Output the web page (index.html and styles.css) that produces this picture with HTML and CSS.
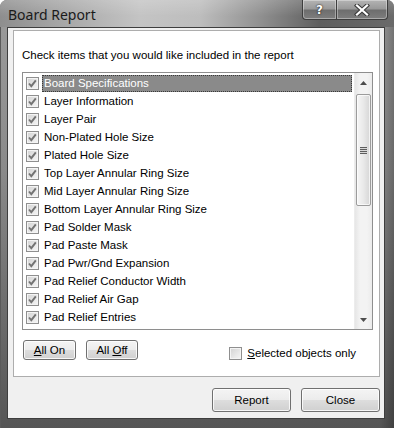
FILE: index.html
```html
<!DOCTYPE html>
<html>
<head>
<meta charset="utf-8">
<link rel="stylesheet" href="styles.css">
</head>
<body>
<div class="window">
  <div class="titlebar">
    <span class="title">Board Report</span>
    <div class="caption-buttons">
      <div class="cbtn help">?</div>
      <div class="cbtn close">
        <svg width="16" height="12" viewBox="0 0 16 12"><path d="M3 1.5 L13 10.5 M13 1.5 L3 10.5" stroke="#3a3a3a" stroke-width="4.2" stroke-linecap="square"/><path d="M3 1.5 L13 10.5 M13 1.5 L3 10.5" stroke="#ffffff" stroke-width="2.2" stroke-linecap="square"/></svg>
      </div>
    </div>
  </div>
  <div class="client">
    <div class="panel">
      <div class="prompt">Check items that you would like included in the report</div>
      <div class="listbox">
        <div class="items">
          <div class="row selected"><span class="cb checked"></span><span class="lbl">Board Specifications</span></div>
          <div class="row"><span class="cb checked"></span><span class="lbl">Layer Information</span></div>
          <div class="row"><span class="cb checked"></span><span class="lbl">Layer Pair</span></div>
          <div class="row"><span class="cb checked"></span><span class="lbl">Non-Plated Hole Size</span></div>
          <div class="row"><span class="cb checked"></span><span class="lbl">Plated Hole Size</span></div>
          <div class="row"><span class="cb checked"></span><span class="lbl">Top Layer Annular Ring Size</span></div>
          <div class="row"><span class="cb checked"></span><span class="lbl">Mid Layer Annular Ring Size</span></div>
          <div class="row"><span class="cb checked"></span><span class="lbl">Bottom Layer Annular Ring Size</span></div>
          <div class="row"><span class="cb checked"></span><span class="lbl">Pad Solder Mask</span></div>
          <div class="row"><span class="cb checked"></span><span class="lbl">Pad Paste Mask</span></div>
          <div class="row"><span class="cb checked"></span><span class="lbl">Pad Pwr/Gnd Expansion</span></div>
          <div class="row"><span class="cb checked"></span><span class="lbl">Pad Relief Conductor Width</span></div>
          <div class="row"><span class="cb checked"></span><span class="lbl">Pad Relief Air Gap</span></div>
          <div class="row"><span class="cb checked"></span><span class="lbl">Pad Relief Entries</span></div>
          <div class="row"><span class="cb checked"></span><span class="lbl">Via Solder Mask</span></div>
        </div>
        <div class="scrollbar">
          <div class="sb-arrow"><svg width="7" height="4" viewBox="0 0 7 4"><path d="M0 4 L3.5 0 L7 4 Z" fill="#4d4d4d"/></svg></div>
          <div class="sb-thumb"><span class="grip"></span></div>
          <div class="sb-track"></div>
          <div class="sb-arrow"><svg width="7" height="4" viewBox="0 0 7 4"><path d="M0 0 L3.5 4 L7 0 Z" fill="#4d4d4d"/></svg></div>
        </div>
      </div>
      <div class="controls">
        <button class="btn small"><u>A</u>ll On</button>
        <button class="btn small">All <u>O</u>ff</button>
        <label class="option"><span class="cb empty"></span><span><u>S</u>elected objects only</span></label>
      </div>
    </div>
    <div class="footer">
      <button class="btn big">Report</button>
      <button class="btn big">Close</button>
    </div>
  </div>
</div>
</body>
</html>
```
FILE: styles.css
```css
* { box-sizing: border-box; }
body {
  margin: 0;
  background: #ffffff;
  font-family: "Liberation Sans", Arial, sans-serif;
  font-size: 11.5px;
  color: #000;
}
.window {
  width: 394px;
  height: 428px;
  display: flex;
  flex-direction: column;
  padding-bottom: 9px;
  border-radius: 7px 7px 0 0;
  overflow: hidden;
  background:
    linear-gradient(to right, rgba(0,0,0,0) 0, rgba(0,0,0,0) 380px, rgba(0,0,0,0.25) 394px),
    linear-gradient(to bottom, #9c9c9c 0, #8a8a8a 40%, #666666 80%, #555555 100%);
  box-shadow: inset 1px 0 0 #5a5a5a, inset 0 1px 0 #6a6a6a;
}
.titlebar {
  height: 27px;
  flex: none;
  display: flex;
  align-items: flex-start;
  padding: 0 6px 0 8px;
  background:
    linear-gradient(to bottom, rgba(255,255,255,0.18) 0, rgba(255,255,255,0) 60%),
    linear-gradient(to right, #8e8e8e 0, #a2a2a2 50px, #c4c4c4 140px, #bdbdbd 200px, #909090 260px, #5e5e5e 320px, #6a6a6a 394px);
}
.title {
  font-family: "Noto Sans", "Open Sans", sans-serif;
  font-size: 14px;
  line-height: 18px;
  margin-top: 6px;
  color: #1a1a1a;
}
.caption-buttons {
  margin-left: auto;
  display: flex;
}
.cbtn {
  height: 20px;
  display: flex;
  align-items: center;
  justify-content: center;
  border: 1px solid #3e3e3e;
  border-top: none;
  background: linear-gradient(to bottom, #b4b4b4 0, #9a9a9a 45%, #6e6e6e 55%, #7e7e7e 100%);
  box-shadow: inset 0 0 0 1px rgba(255,255,255,0.35);
}
.cbtn.help {
  width: 34px;
  border-radius: 0 0 0 4px;
  border-right: none;
  color: #fff;
  font-family: "DejaVu Sans", sans-serif;
  font-weight: bold;
  font-size: 12px;
  text-shadow: 0 0 2px #222, 0 0 1px #222;
}
.cbtn.close {
  width: 52px;
  border-radius: 0 0 4px 0;
}
.client {
  flex: 1;
  margin: 0 9px 0 7px;
  background: #f0f0f0;
  border: 1px solid #3e3e3e;
  padding: 2px 4px 0 5px;
  display: flex;
  flex-direction: column;
}
.panel {
  background: #ffffff;
  border: 1px solid #adadad;
  height: 347px;
  padding: 16px 6px 0 8px;
  display: flex;
  flex-direction: column;
}
.prompt {
  line-height: 16px;
  height: 16px;
}
.listbox {
  margin-top: 9px;
  height: 258px;
  border: 1px solid #8e8e8e;
  display: flex;
}
.items {
  flex: 1;
  overflow: hidden;
  padding-top: 1px;
}
.row {
  height: 18px;
  display: flex;
  align-items: center;
  padding-left: 3px;
  margin-right: 2px;
}
.cb {
  width: 13px;
  height: 13px;
  flex: none;
  border: 1px solid #8f8f8f;
  background: linear-gradient(135deg, #d2d2d2 0, #ececec 70%, #f6f6f6 100%);
  box-shadow: inset 0 0 0 1px #f4f4f4;
}
.cb.checked {
  background:
    url("data:image/svg+xml;utf8,<svg xmlns='http://www.w3.org/2000/svg' width='11' height='11' viewBox='0 0 11 11'><path d='M2 5.5 L4.3 8.2 L8.8 2.3' fill='none' stroke='%23737373' stroke-width='1.9'/></svg>") center/11px 11px no-repeat,
    linear-gradient(135deg, #d2d2d2 0, #ececec 70%, #f6f6f6 100%);
}
.lbl {
  flex: 1;
  margin-left: 3px;
  height: 17px;
  line-height: 17px;
  padding-left: 2px;
  white-space: nowrap;
}
.row.selected .lbl {
  background: #8a8a8a;
  color: #ffffff;
  outline: 1px dotted #3a3a3a;
  outline-offset: -1px;
}
.scrollbar {
  width: 18px;
  flex: none;
  display: flex;
  flex-direction: column;
  background: linear-gradient(to right, #e6e6e6 0, #f3f3f3 30%, #f3f3f3 70%, #ebebeb 100%);
  border-left: 1px solid #ececec;
}
.sb-arrow {
  height: 19px;
  flex: none;
  display: flex;
  align-items: center;
  justify-content: center;
}
.sb-thumb {
  height: 112px;
  margin: 2px 1px 0 1px;
  border: 1px solid #9c9c9c;
  border-radius: 2px;
  background: linear-gradient(to right, #f6f6f6 0, #e9e9e9 50%, #d6d6d6 100%);
  box-shadow: inset 0 0 0 1px rgba(255,255,255,0.7);
  display: flex;
  align-items: center;
  justify-content: center;
}
.grip {
  width: 7px;
  height: 7px;
  background: repeating-linear-gradient(to bottom, #5e5e5e 0, #5e5e5e 1px, #d8d8d8 1px, #d8d8d8 2px);
}
.sb-track { flex: 1; }
.controls {
  display: flex;
  align-items: center;
  margin-top: 10px;
  padding-left: 1px;
}
.btn {
  font-family: "Liberation Sans", Arial, sans-serif;
  font-size: 11.5px;
  color: #000;
  border: 1px solid #707070;
  border-radius: 3px;
  background: linear-gradient(to bottom, #f4f4f4 0, #ececec 48%, #dddddd 52%, #d0d0d0 100%);
  box-shadow: inset 0 0 0 1px rgba(255,255,255,0.8);
  padding: 0;
}
.btn.small { height: 20px; width: 53px; }
.btn.small + .btn.small { margin-left: 10px; width: 52px; }
.btn.big { height: 24px; width: 79px; }
.option {
  margin-left: auto;
  margin-right: 17px;
  display: flex;
  align-items: center;
  gap: 5px;
  padding-top: 6px;
}
.footer {
  display: flex;
  justify-content: flex-end;
  gap: 10px;
  margin-top: 11px;
}
```
